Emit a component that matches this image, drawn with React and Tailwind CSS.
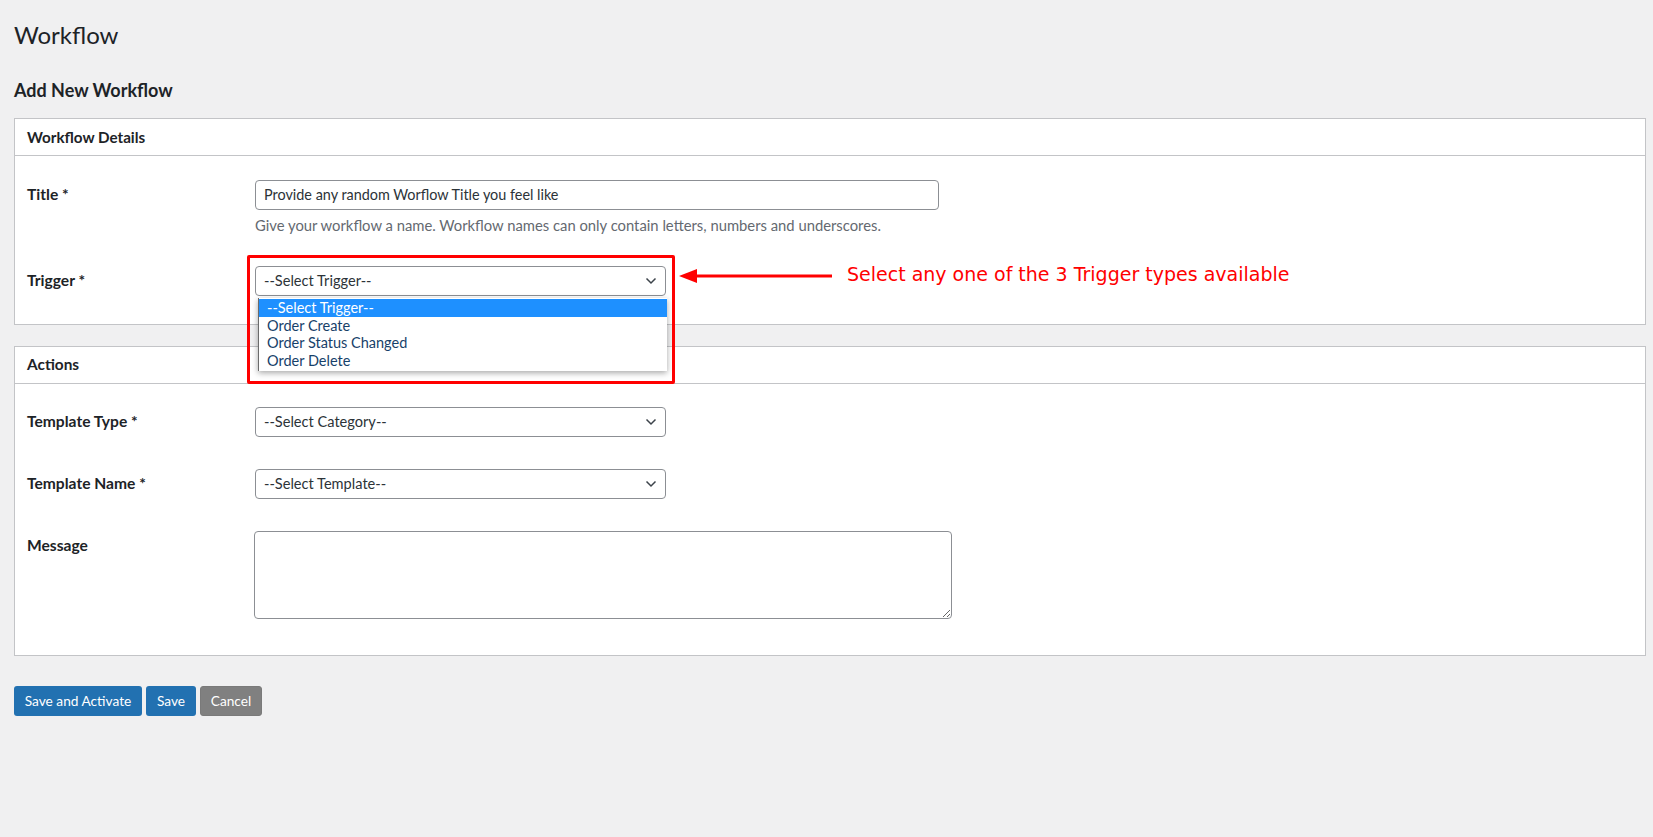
import React from "react";

const font = { fontFamily: "Lato, 'Noto Sans', sans-serif" };

const Chevron = () => (
  <svg width="12" height="8" viewBox="0 0 12 8" className="shrink-0">
    <path d="M1.5 1.5 L6 6 L10.5 1.5" fill="none" stroke="#3c434a" strokeWidth="1.5" />
  </svg>
);

const FakeSelect = ({ label, width = "w-[411px]" }) => (
  <div className={`${width} h-[30px] border border-[#8c8f94] rounded-[4px] bg-white flex items-center justify-between pl-[8px] pr-[8px] text-[14.6px] text-[#2c3338]`}>
    <span>{label}</span>
    <Chevron />
  </div>
);

const Row = ({ label, children, className = "" }) => (
  <div className={`flex items-start ${className}`}>
    <div className="w-[228px] h-[30px] flex items-center text-[15.6px] font-bold text-[#1d2327]">
      {label}
    </div>
    <div>{children}</div>
  </div>
);

export default function App() {
  return (
    <div className="relative min-h-[837px] bg-[#f0f0f1] text-[#1d2327]" style={font}>
      <div className="pl-[14px] pr-[7px] pt-[20px]">
        <h1 className="text-[24px] leading-[29px] font-normal">Workflow</h1>
        <h2 className="mt-[29px] text-[18px] leading-[24px] font-bold">Add New Workflow</h2>

        {/* Workflow Details */}
        <div className="mt-[16px] bg-white border border-[#c3c4c7]">
          <div className="h-[37px] border-b border-[#c3c4c7] px-[12px] flex items-center text-[15.2px] font-bold">
            Workflow Details
          </div>
          <div className="px-[12px] pt-[24px] pb-[28px]">
            <Row label="Title *">
              <div className="w-[684px] h-[30px] border border-[#8c8f94] rounded-[4px] flex items-center px-[8px] text-[14.4px] text-[#2c3338]">
                Provide any random Worflow Title you feel like
              </div>
              <p className="mt-[6px] text-[14.8px] leading-[18px] text-[#646970]">
                Give your workflow a name. Workflow names can only contain letters, numbers and underscores.
              </p>
            </Row>
            <Row label="Trigger *" className="mt-[32px]">
              <FakeSelect label="--Select Trigger--" />
            </Row>
          </div>
        </div>

        {/* Actions */}
        <div className="mt-[21px] bg-white border border-[#c3c4c7]">
          <div className="h-[37px] border-b border-[#c3c4c7] px-[12px] flex items-center text-[15.4px] font-bold">
            Actions
          </div>
          <div className="px-[12px] pt-[23px] pb-[36px]">
            <Row label="Template Type *">
              <FakeSelect label="--Select Category--" />
            </Row>
            <Row label="Template Name *" className="mt-[32px]">
              <FakeSelect label="--Select Template--" />
            </Row>
            <Row label="Message" className="mt-[32px]">
              <textarea
                className="block w-[698px] h-[88px] -ml-[1px] border border-[#8c8f94] rounded-[4px] bg-white"
                defaultValue=""
              />
            </Row>
          </div>
        </div>

        <div className="mt-[30px] flex gap-[4px] text-[13.7px] text-white">
          <button className="h-[30px] w-[128px] rounded-[3px] bg-[#2271b1]">Save and Activate</button>
          <button className="h-[30px] w-[50px] rounded-[3px] bg-[#2271b1]">Save</button>
          <button className="h-[30px] w-[62px] rounded-[3px] bg-[#808080] border border-[#7a7a7a]">Cancel</button>
        </div>
      </div>

      {/* open dropdown list */}
      <div className="absolute left-[258px] top-[298px] w-[409px] h-[73px] bg-white border-l border-[#6b6b6b] shadow-[0_2px_6px_rgba(0,0,0,0.35)] pt-[1px] text-[14.5px] text-[#17416a]">
        <div className="h-[17.5px] leading-[17.5px] pl-[8px] bg-[#1e90ff] text-white">--Select Trigger--</div>
        <div className="h-[17.5px] leading-[17.5px] pl-[8px]">Order Create</div>
        <div className="h-[17.5px] leading-[17.5px] pl-[8px]">Order Status Changed</div>
        <div className="h-[17.5px] leading-[17.5px] pl-[8px]">Order Delete</div>
      </div>

      {/* annotation */}
      <div className="absolute left-[247px] top-[255px] w-[428px] h-[129px] border-[3px] border-[#ff0000] rounded-[2px]" />
      <svg className="absolute left-[676px] top-[266px]" width="160" height="20" viewBox="0 0 160 20">
        <path d="M3 10 L21 3 L21 17 Z" fill="#ff0000" />
        <rect x="20" y="8.5" width="136" height="3" fill="#ff0000" />
      </svg>
      <div
        className="absolute left-[847px] top-[261px] text-[19px] leading-[26px] text-[#ff0000]"
        style={{ fontFamily: "'DejaVu Sans', sans-serif" }}
      >
        Select any one of the 3 Trigger types available
      </div>
    </div>
  );
}
